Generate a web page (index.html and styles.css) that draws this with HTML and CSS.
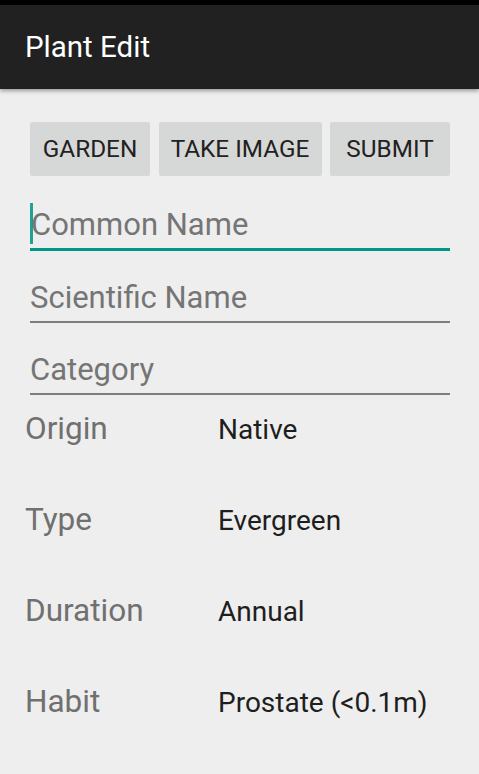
FILE: index.html
```html
<!DOCTYPE html>
<html>
<head>
<meta charset="utf-8">
<link rel="stylesheet" href="styles.css">
</head>
<body>
<div class="statusbar"></div>
<header class="appbar"><h1 class="title">Plant Edit</h1></header>
<main class="content">
  <div class="buttons">
    <button class="btn">GARDEN</button>
    <button class="btn">TAKE IMAGE</button>
    <button class="btn">SUBMIT</button>
  </div>
  <div class="fields">
    <div class="field focused"><span class="caret"></span><span class="hint">Common Name</span></div>
    <div class="field"><span class="hint">Scientific Name</span></div>
    <div class="field"><span class="hint">Category</span></div>
  </div>
  <div class="rows">
    <div class="row"><span class="label">Origin</span><span class="value">Native</span></div>
    <div class="row"><span class="label">Type</span><span class="value">Evergreen</span></div>
    <div class="row"><span class="label">Duration</span><span class="value">Annual</span></div>
    <div class="row"><span class="label">Habit</span><span class="value">Prostate (&lt;0.1m)</span></div>
  </div>
</main>
</body>
</html>
```
FILE: styles.css
```css
html, body {
  margin: 0;
  padding: 0;
  background: #eeeeee;
  font-family: Roboto, "Noto Sans", sans-serif;
  height: 100%;
  overflow: hidden;
}
.statusbar {
  height: 5px;
  background: #000;
}
.appbar {
  height: 84px;
  background: #212121;
  display: flex;
  align-items: center;
  padding-left: 25px;
  box-shadow: 0 2px 4px rgba(0,0,0,0.35);
  position: relative;
  z-index: 1;
}
.title {
  margin: 0;
  color: #fff;
  font-size: 29.5px;
  font-weight: 400;
  line-height: 1;
  padding-top: 2px;
}
.content {
  padding: 0 29px 0 30px;
}
.buttons {
  display: grid;
  grid-template-columns: 120fr 163fr 120fr;
  column-gap: 8.5px;
  margin-top: 33px;
}
.btn {
  height: 54px;
  border: none;
  border-radius: 2px;
  background: #d6d7d7;
  color: #212121;
  font-family: Roboto, "Noto Sans", sans-serif;
  font-size: 24.3px;
  padding: 0;
  line-height: 1;
}
.fields {
  margin-top: 2px;
}
.field {
  padding: 25px 0 1px;
  line-height: 44px;
  font-size: 31px;
  border-bottom: 2px solid #7d7d7d;
  white-space: nowrap;
}
.field.focused {
  border-bottom: 3px solid #009688;
  padding-bottom: 1px;
}
.hint {
  color: #757575;
}
.caret {
  display: inline-block;
  width: 2.5px;
  height: 41px;
  background: #1fa193;
  vertical-align: top;
  margin-right: -1.5px;
}
.rows {
  margin-left: -5px;
}
.row {
  display: grid;
  grid-template-columns: 193px 1fr;
  align-items: baseline;
  padding: 14px 0 36px;
  line-height: 40px;
}
.label {
  font-size: 31.5px;
  color: #707070;
}
.value {
  font-size: 28px;
  color: #1e1e1e;
}
```
